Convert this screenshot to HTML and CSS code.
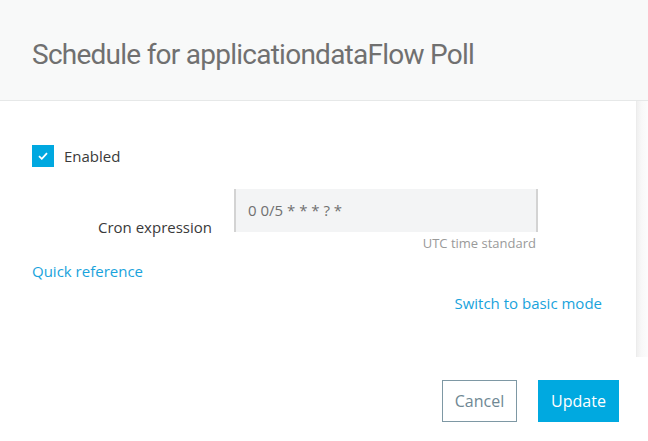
FILE: index.html
```html
<!DOCTYPE html>
<html>
<head>
<meta charset="utf-8">
<link rel="stylesheet" href="styles.css">
</head>
<body>
<div class="dialog">
  <div class="header">
    <h1 class="title">Schedule for applicationdataFlow Poll</h1>
  </div>
  <div class="body">
    <div class="main">
      <label class="check-row">
        <span class="checkbox">
          <svg width="10" height="8" viewBox="0 0 10 8"><path d="M1 4.2 L3.8 6.8 L9 1.2" fill="none" stroke="#fff" stroke-width="1.8"/></svg>
        </span>
        <span class="check-label">Enabled</span>
      </label>
      <div class="cron-row">
        <div class="cron-label">Cron expression</div>
        <div class="cron-field">
          <div class="cron-input">0 0/5 * * * ? *</div>
          <div class="cron-hint">UTC time standard</div>
        </div>
      </div>
      <a class="link quick">Quick reference</a>
      <div class="switch-row"><a class="link">Switch to basic mode</a></div>
    </div>
    <div class="scrolltrack"></div>
  </div>
  <div class="footer">
    <button class="btn btn-cancel">Cancel</button>
    <button class="btn btn-update">Update</button>
  </div>
</div>
</body>
</html>
```
FILE: styles.css
```css
html, body { margin: 0; padding: 0; background: #fff; }
body { font-family: "Open Sans", "Liberation Sans", sans-serif; color: #3a3a3a; width: 648px; height: 441px; overflow: hidden; }
.header { height: 100px; background: #f8f9f9; border-bottom: 1px solid #e6e8e8; box-sizing: content-box; display: flex; align-items: flex-start; }
.title { margin: 0; padding: 38px 0 0 32px; font-family: Roboto, "DejaVu Sans Condensed", sans-serif; font-weight: 400; font-size: 28px; line-height: 34px; color: #707070; letter-spacing: -0.75px; }
.body { display: flex; height: 256px; }
.main { flex: 1; padding: 44px 34px 0 32px; display: flex; flex-direction: column; }
.scrolltrack { width: 11px; background: linear-gradient(to right, #f0f0f0, #f8f8f8 40%, #fcfcfc); border-left: 1px solid #ececec; }
.check-row { display: flex; align-items: center; height: 22px; }
.checkbox { width: 22px; height: 22px; background: #00a8e0; display: flex; align-items: center; justify-content: center; }
.check-label { margin-left: 10px; font-size: 15px; line-height: 22px; color: #3a3a3a; }
.cron-row { display: flex; margin-top: 22px; }
.cron-label { width: 180px; text-align: right; font-size: 15px; line-height: 20px; margin-top: 28px; color: #3a3a3a; }
.cron-field { margin-left: 22px; width: 304px; display: flex; flex-direction: column; }
.cron-input { height: 43px; box-sizing: border-box; background: #f3f4f5; border-left: 2px solid #d3d3d3; border-right: 2px solid #d3d3d3; padding-left: 12px; font-size: 15px; line-height: 43px; color: #707070; }
.cron-hint { text-align: right; font-size: 13px; line-height: 16px; margin-top: 3px; padding-right: 2px; color: #9a9a9a; }
.link { color: #19a3dc; font-size: 15px; line-height: 20px; text-decoration: none; }
.quick { margin-top: 10px; align-self: flex-start; }
.switch-row { margin-top: 12px; display: flex; justify-content: flex-end; }
.footer { display: flex; justify-content: flex-end; gap: 21px; padding: 23px 29px 0 0; }
.btn { height: 42px; box-sizing: border-box; font-family: "Open Sans", "Liberation Sans", sans-serif; font-size: 16px; padding: 0; }
.btn-cancel { width: 75px; background: #fff; border: 1px solid #7e98a4; color: #6f8894; }
.btn-update { width: 81px; background: #00a9e0; border: none; color: #fff; }
```
